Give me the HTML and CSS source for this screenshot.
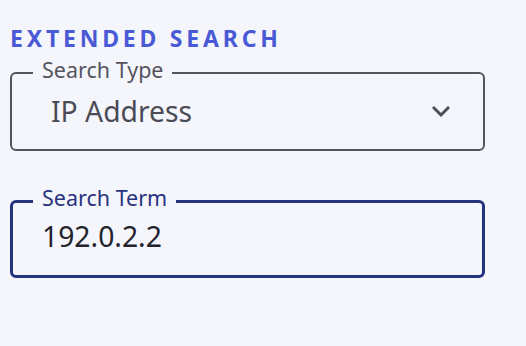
FILE: index.html
```html
<!DOCTYPE html>
<html lang="en">
<head>
    <meta charset="UTF-8">
    <meta name="viewport" content="width=device-width, initial-scale=1.0">
    <title>Extended Search</title>
    <link rel="stylesheet" href="styles.css">
</head>
<body>
    <div class="search-panel">
        <h2 class="panel-title">EXTENDED SEARCH</h2>

        <fieldset class="field field-select">
            <legend class="field-label">Search Type</legend>
            <div class="field-row">
                <span class="select-value">IP Address</span>
                <svg class="chevron" width="18" height="11" viewBox="0 0 18 11">
                    <path d="M2 2 L9 9 L16 2" fill="none" stroke="#50505b" stroke-width="3" stroke-linecap="square"/>
                </svg>
            </div>
        </fieldset>

        <fieldset class="field field-active">
            <legend class="field-label">Search Term</legend>
            <div class="field-row">
                <span class="input-value">192.0.2.2</span>
            </div>
        </fieldset>
    </div>
</body>
</html>
```

FILE: styles.css
```css
body {
    margin: 0;
    background-color: #f5f6fc;
    font-family: "Noto Sans", "Open Sans", sans-serif;
}
.search-panel {
    width: 475px;
    padding: 25px 10px 0;
}
.panel-title {
    margin: 0 0 9px;
    font-size: 23px;
    line-height: 26px;
    font-weight: 700;
    letter-spacing: 3.8px;
    color: #4a5ad6;
}
.field {
    margin: 0;
    padding: 0;
    min-width: 0;
    border: 2px solid #54545e;
    border-radius: 6px;
}
.field-label {
    margin-left: 21px;
    padding: 0 9px 6px;
    font-size: 21.5px;
    line-height: 20px;
    color: #54545e;
}
.field-row {
    display: flex;
    align-items: center;
    justify-content: space-between;
}
.field-select .field-row {
    padding: 6px 33px 19px 39px;
}
.select-value {
    font-size: 28.3px;
    line-height: 38px;
    color: #4b4b55;
}
.chevron {
    display: block;
}
.field-active {
    margin-top: 37px;
    border: 3px solid #283380;
}
.field-active .field-label {
    margin-left: 20px;
    color: #283380;
}
.field-active .field-row {
    padding: 4px 27px 21px 29px;
}
.input-value {
    font-size: 28.3px;
    line-height: 36px;
    color: #23232b;
}
```
